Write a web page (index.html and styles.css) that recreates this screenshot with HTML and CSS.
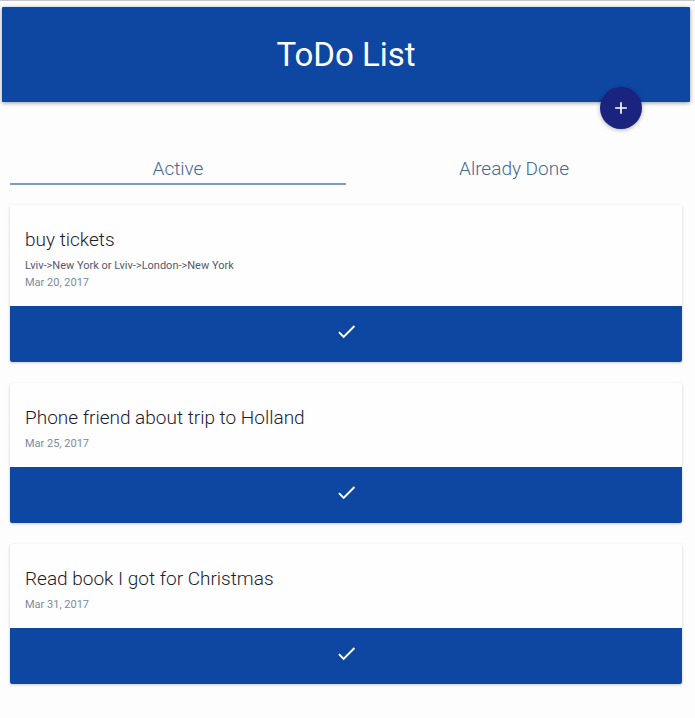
FILE: index.html
```html
<!DOCTYPE html>
<html lang="en">
<head>
<meta charset="utf-8">
<meta name="viewport" content="width=device-width, initial-scale=1">
<title>ToDo List</title>
<link rel="stylesheet" href="styles.css">
</head>
<body>
<header class="header">
  <h1 class="header-title">ToDo List</h1>
  <button class="fab" type="button" aria-label="Add task">
    <svg class="fab-icon" viewBox="0 0 24 24" aria-hidden="true"><path d="M19 13h-6v6h-2v-6H5v-2h6V5h2v6h6v2z"/></svg>
  </button>
</header>
<main class="main">
  <nav class="tabs">
    <a class="tab tab-active" href="#active">Active</a>
    <a class="tab" href="#done">Already Done</a>
  </nav>
  <section class="list" id="active">
    <article class="card">
      <div class="card-body">
        <h2 class="card-title">buy tickets</h2>
        <p class="card-text">Lviv-&gt;New York or Lviv-&gt;London-&gt;New York</p>
        <p class="card-date">Mar 20, 2017</p>
      </div>
      <button class="card-done" type="button" aria-label="Mark as done">
        <svg class="check" viewBox="0 0 24 24" aria-hidden="true"><path d="M9 16.17L4.83 12l-1.42 1.41L9 19 21 7l-1.41-1.41z"/></svg>
      </button>
    </article>
    <article class="card">
      <div class="card-body">
        <h2 class="card-title">Phone friend about trip to Holland</h2>
        <p class="card-date">Mar 25, 2017</p>
      </div>
      <button class="card-done" type="button" aria-label="Mark as done">
        <svg class="check" viewBox="0 0 24 24" aria-hidden="true"><path d="M9 16.17L4.83 12l-1.42 1.41L9 19 21 7l-1.41-1.41z"/></svg>
      </button>
    </article>
    <article class="card">
      <div class="card-body">
        <h2 class="card-title">Read book I got for Christmas</h2>
        <p class="card-date">Mar 31, 2017</p>
      </div>
      <button class="card-done" type="button" aria-label="Mark as done">
        <svg class="check" viewBox="0 0 24 24" aria-hidden="true"><path d="M9 16.17L4.83 12l-1.42 1.41L9 19 21 7l-1.41-1.41z"/></svg>
      </button>
    </article>
  </section>
</main>
</body>
</html>
```
FILE: styles.css
```css
* {
  box-sizing: border-box;
}

body {
  margin: 0;
  border-top: 1px solid #c8c6ce;
  background: #fdfdfd;
  font-family: Roboto, "Liberation Sans", sans-serif;
}

h1,
h2,
p {
  margin: 0;
}

button {
  padding: 0;
  border: 0;
  cursor: pointer;
}

.header {
  position: relative;
  margin: 6px 5px 0 2px;
  padding: 28px 0 27px;
  border-radius: 1px;
  background: #0d47a1;
  box-shadow: 0 1px 4px rgba(0, 0, 0, 0.4);
}

.header-title {
  color: #fff;
  font-size: 33px;
  font-weight: 400;
  line-height: 40px;
  text-align: center;
}

.fab {
  position: absolute;
  right: 48px;
  bottom: -27px;
  display: flex;
  align-items: center;
  justify-content: center;
  width: 42px;
  height: 42px;
  border-radius: 50%;
  background: #1a237e;
  box-shadow: 0 1px 4px rgba(0, 0, 0, 0.3);
}

.fab-icon {
  width: 20px;
  height: 20px;
  fill: #fff;
}

.main {
  padding: 53px 13px 32px 10px;
}

.tabs {
  display: flex;
}

.tab {
  flex: 1;
  border-bottom: 2px solid transparent;
  color: #3f6899;
  font-size: 19px;
  font-weight: 300;
  line-height: 28px;
  text-align: center;
  text-decoration: none;
}

.tab-active {
  border-bottom-color: #7f9bc0;
}

.list {
  display: grid;
  gap: 21px;
  margin-top: 20px;
}

.card {
  border-radius: 2px;
  background: #fefefe;
  box-shadow: 0 1px 3px rgba(0, 0, 0, 0.2);
  overflow: hidden;
}

.card-body {
  padding: 20px 15px 15px;
}

.card-title {
  margin-bottom: 2px;
  color: #1c1c2e;
  font-size: 19px;
  font-weight: 300;
  line-height: 30px;
}

.card-text,
.card-date {
  color: #7c8a9c;
  font-size: 11px;
  line-height: 17px;
}

.card-text {
  color: #545870;
}

.card-done {
  display: flex;
  align-items: center;
  justify-content: center;
  width: 100%;
  height: 56px;
  padding-bottom: 5px;
  background: #0d47a1;
}

.check {
  width: 23px;
  height: 23px;
  fill: #fff;
}
```
